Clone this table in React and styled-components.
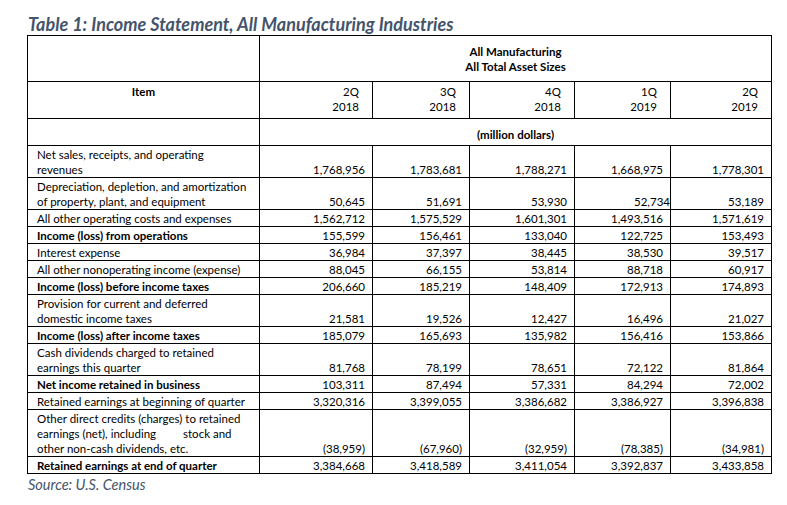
import React from "react";
import styled, { createGlobalStyle } from "styled-components";

const Global = createGlobalStyle`
  html, body { margin: 0; padding: 0; background: #fff; }
  body { font-family: Lato, "Open Sans", sans-serif; color: #000; }
`;

const Page = styled.div`
  width: 787px;
  height: 505px;
  box-sizing: border-box;
  padding-left: 27px;
`;

const Title = styled.h1`
  margin: 0;
  padding: 13px 0 0 1px;
  font: italic 700 18px/22px Lato, sans-serif;
  color: #44546a;
`;

const Table = styled.table`
  border-collapse: collapse;
  table-layout: fixed;
  width: 744px;
  font-size: 11.5px;
  line-height: 15px;
`;

const Col = styled.col`
  width: ${(p) => p.$w}px;
`;

const Cell = styled.td`
  border: 1px solid #000;
  padding: ${(p) => p.$pad || "1px 0 0 9px"};
  text-align: ${(p) => p.$align || "left"};
  vertical-align: ${(p) => p.$valign || "top"};
  font-weight: ${(p) => (p.$bold ? 700 : 400)};
  height: ${(p) => (p.$h ? p.$h + "px" : "auto")};
  white-space: nowrap;
  box-sizing: border-box;
`;

const HeadCell = styled(Cell).attrs({ as: "th" })``;

const QuarterCell = styled(HeadCell)`
  text-align: right;
  font-weight: 400;
  padding: 2px 13px 0 0;
`;

const Num = styled(Cell)`
  text-align: right;
  vertical-align: bottom;
  padding: 0 ${(p) => (p.$tight ? "0" : "7px")} 0 0;
  overflow: visible;
`;

const Gap = styled.span`
  display: inline-block;
  width: ${(p) => p.$w}px;
`;

const Source = styled.p`
  margin: 2px 0 0 1px;
  font: italic 400 14.5px/17px Lato, sans-serif;
  color: #44546a;
`;

const colWidths = [232, 113, 97, 105, 96, 101];

const quarters = [
  ["2Q", "2018"],
  ["3Q", "2018"],
  ["4Q", "2018"],
  ["1Q", "2019"],
  ["2Q", "2019"],
];

const rows = [
  { label: ["Net sales, receipts, and operating", "revenues"], v: ["1,768,956", "1,783,681", "1,788,271", "1,668,975", "1,778,301"] },
  { label: ["Depreciation, depletion, and amortization", "of property, plant, and equipment"], v: ["50,645", "51,691", "53,930", "52,734", "53,189"], tight: 3 },
  { label: ["All other operating costs and expenses"], v: ["1,562,712", "1,575,529", "1,601,301", "1,493,516", "1,571,619"] },
  { label: ["Income (loss) from operations"], bold: true, v: ["155,599", "156,461", "133,040", "122,725", "153,493"] },
  { label: ["Interest expense"], v: ["36,984", "37,397", "38,445", "38,530", "39,517"] },
  { label: ["All other nonoperating income (expense)"], v: ["88,045", "66,155", "53,814", "88,718", "60,917"] },
  { label: ["Income (loss) before income taxes"], bold: true, v: ["206,660", "185,219", "148,409", "172,913", "174,893"] },
  { label: ["Provision for current and deferred", "domestic income taxes"], v: ["21,581", "19,526", "12,427", "16,496", "21,027"] },
  { label: ["Income (loss) after income taxes"], bold: true, v: ["185,079", "165,693", "135,982", "156,416", "153,866"] },
  { label: ["Cash dividends charged to retained", "earnings this quarter"], v: ["81,768", "78,199", "78,651", "72,122", "81,864"] },
  { label: ["Net income retained in business"], bold: true, v: ["103,311", "87,494", "57,331", "84,294", "72,002"] },
  { label: ["Retained earnings at beginning of quarter"], v: ["3,320,316", "3,399,055", "3,386,682", "3,386,927", "3,396,838"] },
  {
    label: [
      "Other direct credits (charges) to retained",
      <>earnings (net), including<Gap $w={27} />stock and</>,
      "other non-cash dividends, etc.",
    ],
    v: ["(38,959)", "(67,960)", "(32,959)", "(78,385)", "(34,981)"],
  },
  { label: ["Retained earnings at end of quarter"], bold: true, v: ["3,384,668", "3,418,589", "3,411,054", "3,392,837", "3,433,858"] },
];

export default function App() {
  return (
    <>
      <Global />
      <Page>
        <Title>Table 1: Income Statement, All Manufacturing Industries</Title>
        <Table>
          <colgroup>
            {colWidths.map((w, i) => (
              <Col key={i} $w={w} />
            ))}
          </colgroup>
          <thead>
            <tr>
              <HeadCell $h={46} />
              <HeadCell colSpan={5} $bold $align="center" $valign="middle" $pad="0">
                All Manufacturing
                <br />
                All Total Asset Sizes
              </HeadCell>
            </tr>
            <tr>
              <HeadCell $h={37} $bold $align="center" $pad="2px 0 0 0">
                Item
              </HeadCell>
              {quarters.map(([q, y], i) => (
                <QuarterCell key={i}>
                  {q}
                  <br />
                  {y}
                </QuarterCell>
              ))}
            </tr>
            <tr>
              <HeadCell $h={27} />
              <HeadCell colSpan={5} $bold $align="center" $valign="bottom" $pad="0 0 3px 0">
                (million dollars)
              </HeadCell>
            </tr>
          </thead>
          <tbody>
            {rows.map((r, i) => (
              <tr key={i}>
                <Cell $bold={r.bold}>
                  {r.label.map((l, j) => (
                    <React.Fragment key={j}>
                      {j > 0 && <br />}
                      {l}
                    </React.Fragment>
                  ))}
                </Cell>
                {r.v.map((v, j) => (
                  <Num key={j} $tight={r.tight === j}>
                    {v}
                  </Num>
                ))}
              </tr>
            ))}
          </tbody>
        </Table>
        <Source>Source: U.S. Census</Source>
      </Page>
    </>
  );
}
